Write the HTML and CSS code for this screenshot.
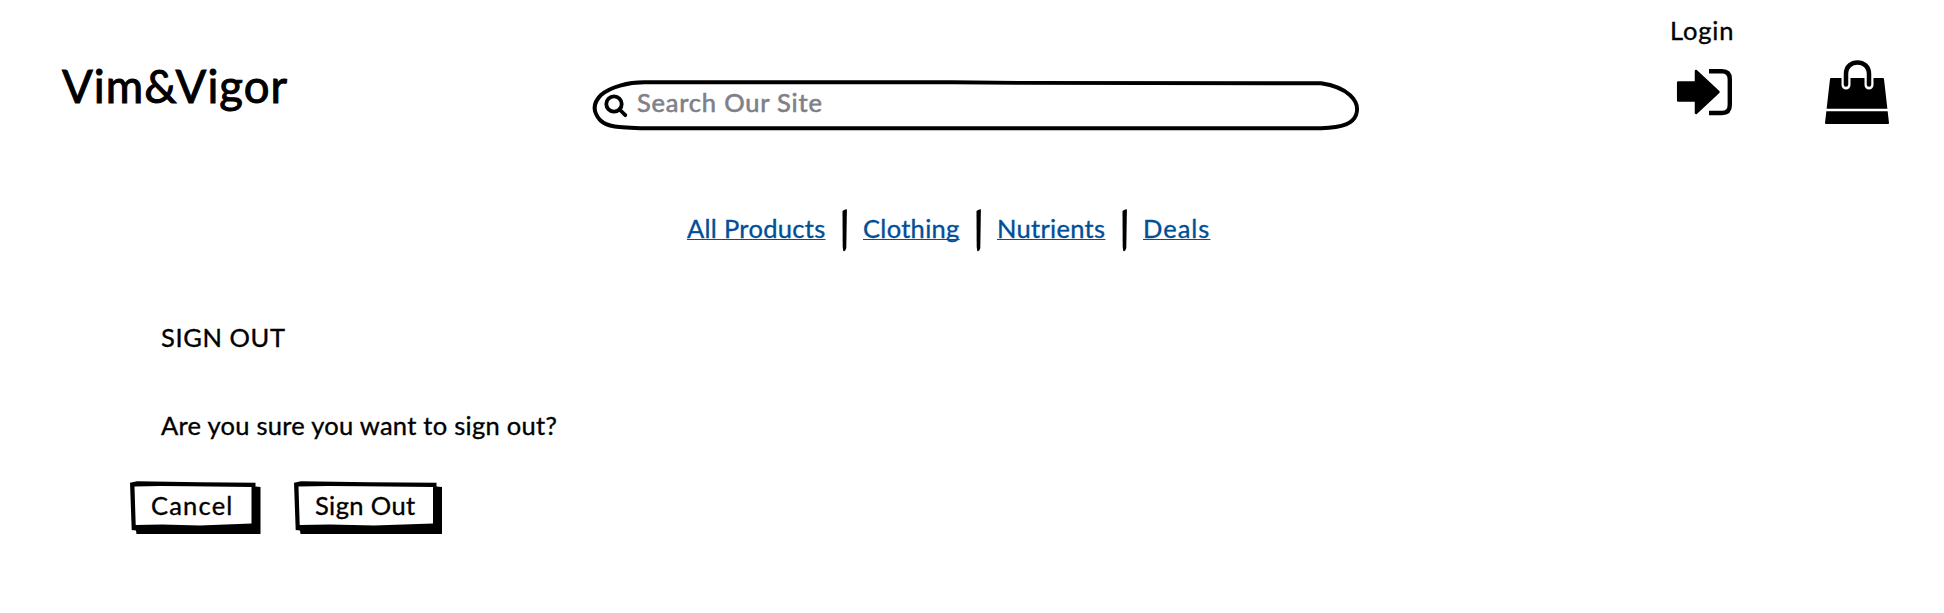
FILE: index.html
```html
<!DOCTYPE html>
<html lang="en">
<head>
<meta charset="utf-8">
<title>Vim&amp;Vigor</title>
<link rel="stylesheet" href="styles.css">
</head>
<body>
<header class="header">
  <h1 class="brand">Vim&amp;Vigor</h1>
  <form class="search">
    <svg class="frame" viewBox="0 0 768 52"><path d="M54 3.300C36 3 18 8 9 16C0 25 1 33 8 41C15 48 25 48.500 54 49.300H729C752 48.500 761 44 764 36C769 22 755 8 729 4.300L430 3.900L360 3.300Z"/></svg>
    <svg class="lens" viewBox="0 0 24 24"><circle cx="10" cy="10" r="7.700"/><path d="M15.500 15.500L21.300 21.200"/></svg>
    <span class="placeholder">Search Our Site</span>
  </form>
  <div class="login">
    <span class="t-login">Login</span>
    <svg class="login-icon" viewBox="0 0 58 50"><path class="arrow" d="M1.200 15.500H19V4L41.500 25L19 46V33.500H1.200Z"/><path class="door" d="M32 4.200H45Q52.800 4.200 52.800 12V38Q52.800 46 45 46H32"/></svg>
  </div>
  <svg class="bag" viewBox="0 0 66 68"><path d="M7 20H59L64 64H2Z"/><path class="halo" d="M22 18V26M45 18V26"/><path class="gap" d="M0 51H66"/><path class="handle" d="M22 25.500V15C22 -.5 45 -.5 45 15V25.500"/></svg>
</header>
<nav class="nav">
  <a class="t-products" href="#">All Products</a>
  <svg class="bar" viewBox="0 0 5 42"><path d="M.5 2Q3 0 4.900 .2L4.300 39Q3.500 43 1.300 42L.7 38Z"/></svg>
  <a class="t-clothing" href="#">Clothing</a>
  <svg class="bar" viewBox="0 0 5 42"><path d="M.5 2Q3 0 4.900 .2L4.300 39Q3.500 43 1.300 42L.7 38Z"/></svg>
  <a class="t-nutrients" href="#">Nutrients</a>
  <svg class="bar" viewBox="0 0 5 42"><path d="M.5 2Q3 0 4.900 .2L4.300 39Q3.500 43 1.300 42L.7 38Z"/></svg>
  <a class="t-deals" href="#">Deals</a>
</nav>
<main class="main">
  <h2 class="heading">SIGN OUT</h2>
  <p class="question">Are you sure you want to sign out?</p>
  <div class="actions">
    <button class="button cancel" type="button">
      <svg class="frame" viewBox="0 0 131 54"><path fill-rule="evenodd" d="M0 1.700L7 .2L70 1.300L125.500 1.700V5.500L130.500 6V53H6.500L6 49.500L1.700 49ZM4.500 5.500L5.700 44L32 43.400L70 44.500L121.500 42.500V6L60 5.300L30 5Z"/></svg>
      <span>Cancel</span>
    </button>
    <button class="button confirm" type="button">
      <svg class="frame" viewBox="0 0 149 54"><path fill-rule="evenodd" d="M0 1.700L7 .2L75 1.300L142.500 1.700V5.500L148 6V53H6.500L6 49.500L1.700 49ZM4.500 5.500L5.700 44L36 43.400L80 44.500L139 42.500V6L68 5.300L34 5Z"/></svg>
      <span>Sign Out</span>
    </button>
  </div>
</main>
</body>
</html>
```
FILE: styles.css
```css
* { box-sizing: border-box; }
body {
  margin: 0;
  min-height: 613px;
  background: #fff;
  color: #000;
  font: 25.500px/30px Lato, "Open Sans", sans-serif;
  -webkit-text-stroke: .35px currentColor;
  white-space: nowrap;
}
h1, h2, p { margin: 0; font-weight: 400; }
svg { display: block; flex: none; overflow: visible; }
.header {
  display: flex;
  align-items: flex-start;
  height: 209px;
  padding-left: 62px;
}
.brand {
  width: 530px;
  padding-top: 59px;
  font-size: 45.500px;
  line-height: 54px;
  letter-spacing: 1px;
  -webkit-text-stroke-width: 1px;
}
.search {
  position: relative;
  display: flex;
  gap: 9px;
  width: 768px;
  height: 52px;
  margin-top: 79px;
  padding: 8px 0 0 12px;
}
.frame { position: absolute; inset: 0; width: 100%; height: 100%; }
.search .frame path { fill: none; stroke: #000; stroke-width: 3.900; }
.lens { width: 24px; height: 24px; margin-top: 7px; fill: none; stroke: #000; stroke-width: 3.800; stroke-linecap: round; }
.placeholder { color: #808088; letter-spacing: .8px; -webkit-text-stroke-width: .6px; }
.login { width: 154px; margin: 15px 0 0 310px; }
.t-login { display: block; letter-spacing: .8px; }
.login-icon { width: 58px; height: 50px; margin: 22px 0 0 6.500px; }
.arrow { stroke: #000; stroke-width: 2.500; stroke-linejoin: round; }
.door { fill: none; stroke: #000; stroke-width: 4.400; }
.bag { width: 66px; height: 68px; margin-top: 59px; }
.bag path { stroke: #000; stroke-width: 2; stroke-linejoin: round; }
.bag .halo { stroke: #fff; stroke-width: 9; stroke-linecap: round; }
.bag .gap { stroke: #fff; stroke-width: 2.300; }
.bag .handle { fill: none; stroke-width: 4.500; stroke-linecap: round; }
.nav { display: flex; height: 104px; padding-left: 687px; }
.nav a {
  height: 42px;
  padding-top: 4px;
  color: #004f98;
  text-underline-offset: 1px;
  text-decoration-thickness: 1px;
  text-decoration-skip-ink: none;
}
.t-products { width: 155px; letter-spacing: .3px; }
.t-clothing { width: 113px; letter-spacing: .3px; }
.t-nutrients { width: 125px; letter-spacing: .3px; }
.t-deals { letter-spacing: 1px; }
.bar { width: 5px; height: 42px; margin-right: 16px; }
.main { padding: 9px 0 0 161px; }
.heading { font-size: 25.500px; line-height: 30px; letter-spacing: .6px; }
.question { margin-top: 58px; letter-spacing: .27px; }
.actions { display: flex; gap: 33px; margin: 41px 0 0 -31px; }
.button {
  position: relative;
  height: 54px;
  padding: 9px 0 0 21px;
  border: 0;
  background: none;
  color: inherit;
  font: inherit;
  text-align: left;
  display: flex;
  align-items: flex-start;
  -webkit-text-stroke: inherit;
}
.cancel { width: 131px; letter-spacing: 1.200px; }
.confirm { width: 149px; letter-spacing: .4px; }
```
